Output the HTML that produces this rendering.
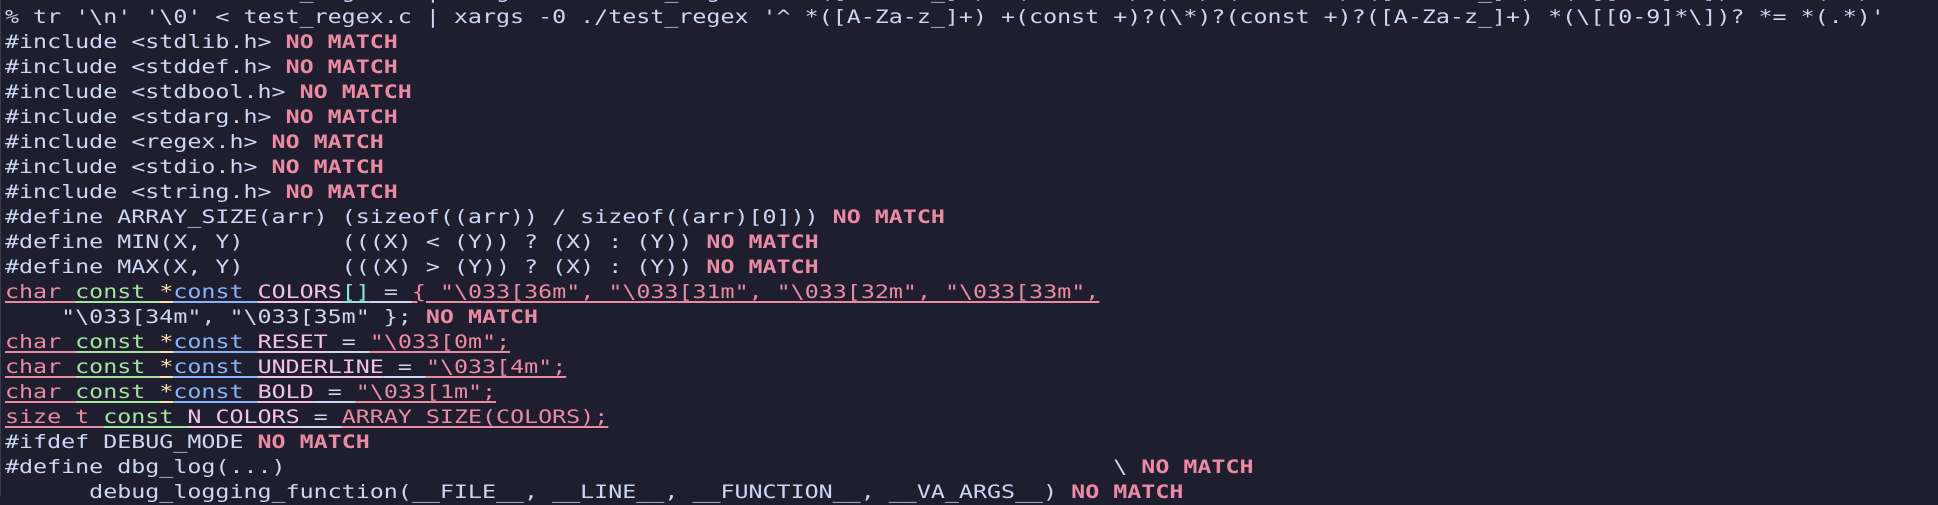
<!DOCTYPE html>
<html><head><meta charset="utf-8"><style>
html,body{margin:0;padding:0;background:#1e1e2e;width:1938px;height:496px;overflow:hidden}
.bl{position:absolute;left:0;top:0;width:1px;height:496px;background:#3b3b4e}
pre{position:absolute;left:5px;top:-20.5px;margin:0;font-family:"DejaVu Sans Mono","Liberation Mono",monospace;font-size:18.87px;line-height:25px;color:#cdd6f4;transform:scaleX(1.2355);transform-origin:0 0;white-space:pre}
b{color:#eb8aa5;font-weight:bold}
u{text-decoration:underline;text-underline-offset:3px;text-decoration-thickness:1.5px}
.r{color:#eb8aa5}.g{color:#a6e3a1}.y{color:#f9e2af}.bb{color:#89b4fa}.p{color:#f5c2e7}.t{color:#94e2d5}.w{color:#cdd6f4}
</style></head><body><div class="bl"></div><pre>% tr '\n' '\0' &lt; test_regex.c | xargs -0 ./test_regex '^ *([A-Za-z_]+) +(const +)?(\*)?(const +)?([A-Za-z_]+) *(\[[0-9]*\])? *= *(.*)'
% tr '\n' '\0' &lt; test_regex.c | xargs -0 ./test_regex '^ *([A-Za-z_]+) +(const +)?(\*)?(const +)?([A-Za-z_]+) *(\[[0-9]*\])? *= *(.*)'
#include &lt;stdlib.h&gt; <b>NO MATCH</b>
#include &lt;stddef.h&gt; <b>NO MATCH</b>
#include &lt;stdbool.h&gt; <b>NO MATCH</b>
#include &lt;stdarg.h&gt; <b>NO MATCH</b>
#include &lt;regex.h&gt; <b>NO MATCH</b>
#include &lt;stdio.h&gt; <b>NO MATCH</b>
#include &lt;string.h&gt; <b>NO MATCH</b>
#define ARRAY_SIZE(arr) (sizeof((arr)) / sizeof((arr)[0])) <b>NO MATCH</b>
#define MIN(X, Y)       (((X) &lt; (Y)) ? (X) : (Y)) <b>NO MATCH</b>
#define MAX(X, Y)       (((X) &gt; (Y)) ? (X) : (Y)) <b>NO MATCH</b>
<u class="r">char </u><u class="g">const </u><u class="y">*</u><u class="bb">const </u><u class="p">COLORS</u><u class="t">[]</u><u class="w"> = </u><u class="r">{ "\033[36m", "\033[31m", "\033[32m", "\033[33m",</u>
    "\033[34m", "\033[35m" }; <b>NO MATCH</b>
<u class="r">char </u><u class="g">const </u><u class="y">*</u><u class="bb">const </u><u class="p">RESET</u><u class="w"> = </u><u class="r">"\033[0m";</u>
<u class="r">char </u><u class="g">const </u><u class="y">*</u><u class="bb">const </u><u class="p">UNDERLINE</u><u class="w"> = </u><u class="r">"\033[4m";</u>
<u class="r">char </u><u class="g">const </u><u class="y">*</u><u class="bb">const </u><u class="p">BOLD</u><u class="w"> = </u><u class="r">"\033[1m";</u>
<u class="r">size_t </u><u class="g">const </u><u class="p">N_COLORS</u><u class="w"> = </u><u class="r">ARRAY_SIZE(COLORS);</u>
#ifdef DEBUG_MODE <b>NO MATCH</b>
#define dbg_log(...)                                                           \ <b>NO MATCH</b>
      debug_logging_function(__FILE__, __LINE__, __FUNCTION__, __VA_ARGS__) <b>NO MATCH</b></pre></body></html>
